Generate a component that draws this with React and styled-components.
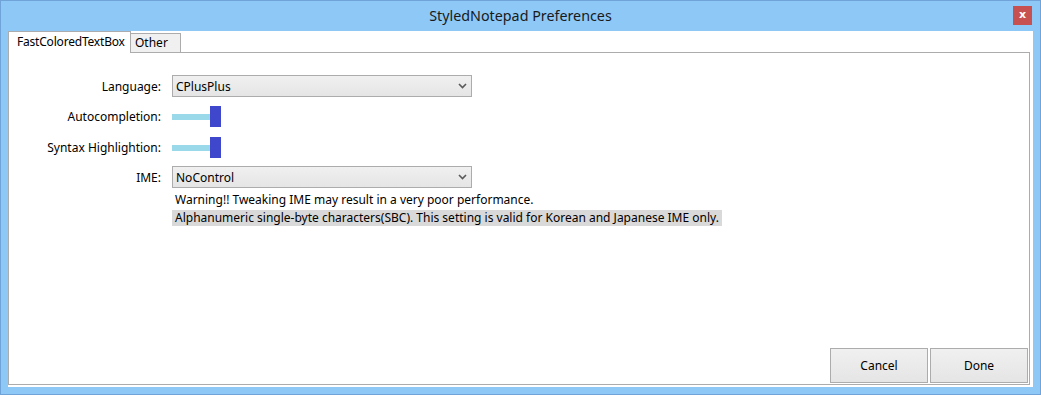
import React from "react";
import styled, { createGlobalStyle } from "styled-components";

const Global = createGlobalStyle`
  html, body { margin: 0; padding: 0; background: #8dc8f7; }
  body { font-family: "Noto Sans", "Open Sans", sans-serif; }
  * { box-sizing: border-box; }
`;

const Window = styled.div`
  width: 1041px;
  height: 395px;
  border: 1px solid #70a4d8;
  background: #8dc8f7;
  display: flex;
  flex-direction: column;
`;

const TitleBar = styled.div`
  height: 30px;
  display: grid;
  grid-template-columns: 1fr auto 1fr;
  padding: 0 8px;
`;

const Title = styled.div`
  grid-column: 2;
  align-self: center;
  font-size: 14.3px;
  color: #1a1a1a;
  line-height: 20px;
  margin-top: -1px;
`;

const CloseButton = styled.div`
  grid-column: 3;
  justify-self: end;
  align-self: start;
  margin-top: 5px;
  width: 19px;
  height: 19px;
  background: #c75050;
  color: #fff;
  font-family: "DejaVu Sans", sans-serif;
  font-weight: bold;
  font-size: 11px;
  line-height: 17px;
  text-align: center;
`;

const Client = styled.div`
  height: 356px;
  margin: 0 7px 7px 7px;
  background: #fff;
  padding: 0 3px 2px 0;
  display: flex;
  flex-direction: column;
`;

const TabStrip = styled.div`
  height: 22px;
  display: flex;
  align-items: flex-end;
  margin-bottom: -1px;
  position: relative;
  z-index: 1;
`;

const Tab = styled.div`
  font-size: 12px;
  color: #000;
  border: 1px solid #acacac;
  border-bottom: ${(p) => (p.$active ? "none" : "1px solid #acacac")};
  background: ${(p) => (p.$active ? "#fff" : "#f0f0f0")};
  height: ${(p) => (p.$active ? 22 : 20)}px;
  width: ${(p) => (p.$active ? 123 : 51)}px;
  margin-left: ${(p) => (p.$active ? 0 : -1)}px;
  padding-left: ${(p) => (p.$active ? 8 : 4)}px;
  line-height: ${(p) => (p.$active ? 19 : 18)}px;
  letter-spacing: ${(p) => (p.$active ? -0.2 : 0)}px;
  white-space: nowrap;
`;

const Page = styled.div`
  flex: 1;
  border: 1px solid #acacac;
  display: flex;
  flex-direction: column;
  padding-top: 22px;
`;

const Form = styled.div`
  flex: 1;
  display: flex;
  flex-direction: column;
`;

const Row = styled.div`
  display: flex;
  align-items: center;
  height: ${(p) => p.$h}px;
  margin-top: ${(p) => p.$mt || 0}px;
`;

const Label = styled.div`
  width: 152px;
  margin-right: 11px;
  text-align: right;
  font-size: 12px;
  color: #000;
  white-space: nowrap;
`;

const Combo = styled.div`
  width: 300px;
  height: 22px;
  border: 1px solid #acacac;
  background: linear-gradient(#f0f0f0, #e5e5e5);
  display: flex;
  align-items: center;
  justify-content: space-between;
  padding: 0 4px 0 3px;
  font-size: 12px;
  color: #000;
`;

const Chevron = () => (
  <svg width="9" height="6" viewBox="0 0 9 6">
    <path d="M1 1 L4.5 4.5 L8 1" fill="none" stroke="#5a5a5a" strokeWidth="1.6" />
  </svg>
);

const Slider = styled.div`
  display: flex;
  align-items: center;
  height: 21px;
`;

const Track = styled.div`
  width: 38px;
  height: 6px;
  background: #99d9ea;
`;

const Thumb = styled.div`
  width: 11px;
  height: 21px;
  background: #3f48cc;
`;

const Note = styled.div`
  margin-left: 163px;
  font-size: 12px;
  line-height: 16px;
  height: 16px;
  padding: 0 3px;
  color: #000;
  white-space: nowrap;
  background: ${(p) => (p.$shade ? "#d9d9d9" : "transparent")};
  align-self: flex-start;
`;

const Footer = styled.div`
  display: flex;
  justify-content: flex-end;
  gap: 2px;
  padding: 0 1px 1px 0;
`;

const Button = styled.div`
  width: 98px;
  height: 35px;
  border: 1px solid #acacac;
  background: linear-gradient(#f0f0f0, #e5e5e5);
  display: flex;
  align-items: center;
  justify-content: center;
  font-size: 12px;
  color: #000;
`;

export default function App() {
  return (
    <>
      <Global />
      <Window>
        <TitleBar>
          <Title>StyledNotepad Preferences</Title>
          <CloseButton>x</CloseButton>
        </TitleBar>
        <Client>
          <TabStrip>
            <Tab $active>FastColoredTextBox</Tab>
            <Tab>Other</Tab>
          </TabStrip>
          <Page>
            <Form>
              <Row $h={22}>
                <Label>Language:</Label>
                <Combo>
                  <span>CPlusPlus</span>
                  <Chevron />
                </Combo>
              </Row>
              <Row $h={21} $mt={9}>
                <Label>Autocompletion:</Label>
                <Slider>
                  <Track />
                  <Thumb />
                </Slider>
              </Row>
              <Row $h={21} $mt={10}>
                <Label>Syntax Highlightion:</Label>
                <Slider>
                  <Track />
                  <Thumb />
                </Slider>
              </Row>
              <Row $h={22} $mt={8}>
                <Label>IME:</Label>
                <Combo>
                  <span>NoControl</span>
                  <Chevron />
                </Combo>
              </Row>
              <Row $h={16} $mt={4}>
                <Note>Warning!! Tweaking IME may result in a very poor performance.</Note>
              </Row>
              <Row $h={16} $mt={2}>
                <Note $shade>
                  Alphanumeric single-byte characters(SBC). This setting is valid for Korean and Japanese IME only.
                </Note>
              </Row>
            </Form>
            <Footer>
              <Button>Cancel</Button>
              <Button>Done</Button>
            </Footer>
          </Page>
        </Client>
      </Window>
    </>
  );
}
